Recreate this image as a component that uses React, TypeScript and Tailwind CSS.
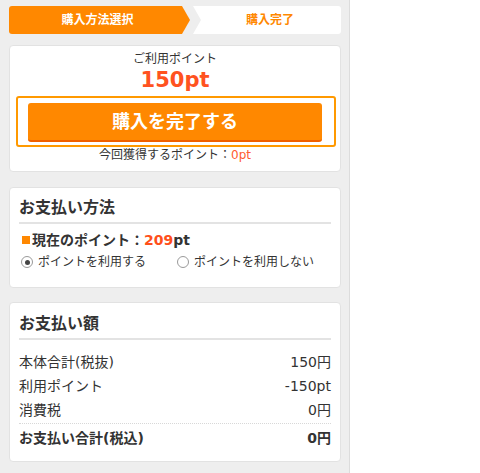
const font = { fontFamily: '"DejaVu Sans", "Noto Sans CJK JP", sans-serif' };

function Radio({ checked, label }: { checked?: boolean; label: string }) {
  return (
    <label className="flex items-center gap-[5px]">
      <span className="flex h-[12px] w-[12px] items-center justify-center rounded-full border border-[#9a9a9a] bg-white">
        {checked && <span className="h-[5px] w-[5px] rounded-full bg-[#444]" />}
      </span>
      <span>{label}</span>
    </label>
  );
}

function Row({ label, value }: { label: string; value: string }) {
  return (
    <div className="flex justify-between text-[14px] leading-[24px]">
      <span>{label}</span>
      <span>{value}</span>
    </div>
  );
}

export default function App() {
  return (
    <div className="h-[473px] w-[480px] bg-white text-[#333]" style={font}>
      <div className="h-full w-[350px] border-r border-[#dcdcdc] bg-[#eeeeee] pl-[9px] pr-[8px] pt-[6px]">
        {/* steps */}
        <div className="flex h-[28px] text-[12px] font-bold leading-[28px]">
          <div
            className="w-[181px] rounded-l-[3px] bg-[#ff8800] text-center text-white"
            style={{ clipPath: 'polygon(0 0, calc(100% - 8px) 0, 100% 50%, calc(100% - 8px) 100%, 0 100%)' }}
          >
            <span className="pr-[4px]">購入方法選択</span>
          </div>
          <div
            className="ml-[3px] flex-1 rounded-r-[3px] bg-white pl-[6px] text-center text-[#ff8800]"
            style={{ clipPath: 'polygon(0 0, 100% 0, 100% 100%, 0 100%, 8px 50%)' }}
          >
            購入完了
          </div>
        </div>

        {/* points + submit */}
        <div className="mt-[11px] rounded-[4px] border border-[#e2e2e2] bg-white pb-[8px] pt-[5px] text-center">
          <p className="text-[12px] leading-[16px]">ご利用ポイント</p>
          <p className="text-[21px] font-bold leading-[26px] text-[#ff5220]">150pt</p>
          <div className="ml-[6px] mr-[4px] mt-[3px] rounded-[3px] border-2 border-[#ff9900] pb-[3px] pl-[10px] pr-[12px] pt-[5px]">
            <button className="h-[39px] w-full rounded-[3px] border-b-2 border-[#f06000] bg-[#ff8800] text-[18px] font-bold text-white">
              購入を完了する
            </button>
          </div>
          <p className="text-[12px] leading-[16px]">
            今回獲得するポイント：<span className="text-[#ff5a30]">0pt</span>
          </p>
        </div>

        {/* payment method */}
        <div className="mt-[15px] rounded-[4px] border border-[#e2e2e2] bg-white px-[9px] pb-[17px] pt-[10px]">
          <h2 className="border-b-2 border-[#e3e3e3] pb-[4px] text-[16px] font-bold leading-[20px]">お支払い方法</h2>
          <p className="mt-[6px] flex items-center text-[14px] font-bold leading-[20px]">
            <span className="ml-[3px] mr-[2px] h-[8px] w-[8px] bg-[#ff8800]" />
            現在のポイント：<span className="text-[#ff4f1a]">209</span>pt
          </p>
          <div className="ml-[2px] mt-[4px] flex gap-[31px] text-[12px] leading-[16px]">
            <Radio checked label="ポイントを利用する" />
            <Radio label="ポイントを利用しない" />
          </div>
        </div>

        {/* payment amount */}
        <div className="mt-[14px] rounded-[4px] border border-[#e2e2e2] bg-white px-[9px] pb-[11px] pt-[11px]">
          <h2 className="border-b-2 border-[#e3e3e3] pb-[4px] text-[16px] font-bold leading-[20px]">お支払い額</h2>
          <div className="mt-[10px]">
            <Row label="本体合計(税抜)" value="150円" />
            <Row label="利用ポイント" value="-150pt" />
            <Row label="消費税" value="0円" />
          </div>
          <div className="mt-[1px] border-t border-dotted border-[#d8d8d8] pt-[2px]">
            <div className="flex justify-between text-[14px] font-bold leading-[24px]">
              <span>お支払い合計(税込)</span>
              <span>0円</span>
            </div>
          </div>
        </div>
      </div>
    </div>
  );
}
